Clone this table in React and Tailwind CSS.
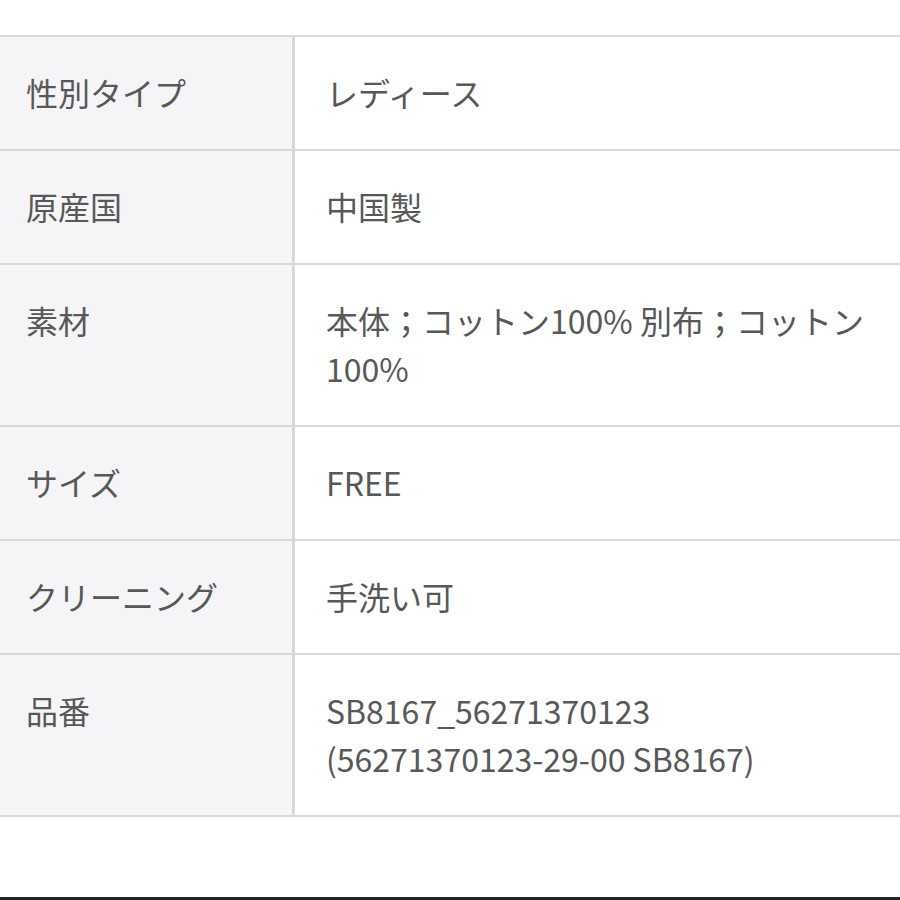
export default function App() {
  const rows = [
    ["性別タイプ", ["レディース"]],
    ["原産国", ["中国製"]],
    ["素材", ["本体；コットン100% 別布；コットン", "100%"]],
    ["サイズ", ["FREE"]],
    ["クリーニング", ["手洗い可"]],
    ["品番", ["SB8167_56271370123", "(56271370123-29-00 SB8167)"]],
  ];
  return (
    <div
      className="w-[900px] h-[900px] bg-white relative overflow-hidden text-[#585858]"
      style={{ fontFamily: '"Noto Sans CJK JP", "Noto Sans", sans-serif' }}
    >
      <div className="pt-[35px]">
        <div className="border-t-[2px] border-[#d8d8d8]">
          {rows.map(([k, v], i) => (
            <div key={i} className="grid grid-cols-[295px_1fr] border-b-[2px] border-[#d8d8d8]">
              <div className="bg-[#f5f5f7] border-r-[3px] border-[#d8d8d8] pl-[26px] pt-[31px] pb-[33px] text-[32px] leading-[48px]">
                {k}
              </div>
              <div className="pl-[31px] pt-[31px] pb-[33px] text-[32px] leading-[48px]">
                {v.map((line, j) => (
                  <div key={j} className="whitespace-nowrap">{line}</div>
                ))}
              </div>
            </div>
          ))}
        </div>
      </div>
      <div className="absolute left-0 right-0 top-[897px] h-[3px] bg-[#222222]" />
    </div>
  );
}
